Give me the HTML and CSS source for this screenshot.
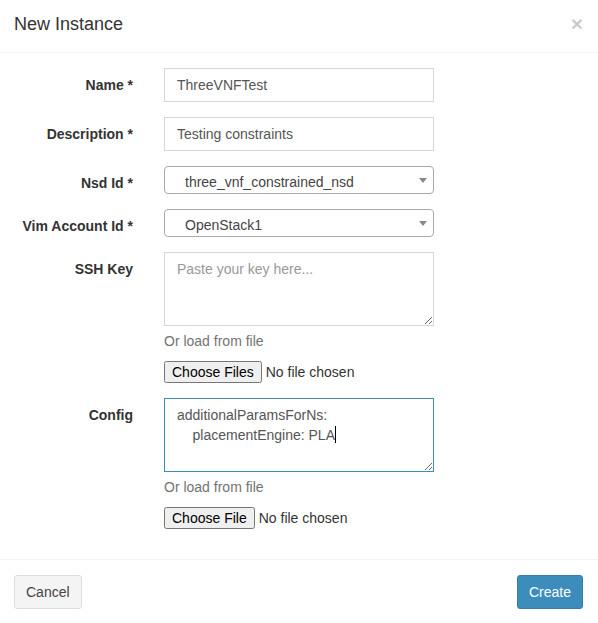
FILE: index.html
```html
<!DOCTYPE html>
<html>
<head>
<meta charset="utf-8">
<link rel="stylesheet" href="styles.css">
</head>
<body>
<div class="modal">
  <div class="modal-header">
    <h4 class="modal-title">New Instance</h4>
    <span class="close">×</span>
  </div>
  <div class="modal-body">
    <div class="form-group">
      <label class="control-label">Name *</label>
      <div class="field"><input class="form-control" type="text" value="ThreeVNFTest"></div>
    </div>
    <div class="form-group">
      <label class="control-label">Description *</label>
      <div class="field"><input class="form-control" type="text" value="Testing constraints"></div>
    </div>
    <div class="form-group">
      <label class="control-label">Nsd Id *</label>
      <div class="field"><div class="select"><span>three_vnf_constrained_nsd</span><i class="arrow"></i></div></div>
    </div>
    <div class="form-group">
      <label class="control-label">Vim Account Id *</label>
      <div class="field"><div class="select"><span>OpenStack1</span><i class="arrow"></i></div></div>
    </div>
    <div class="form-group">
      <label class="control-label">SSH Key</label>
      <div class="field">
        <textarea class="form-control area" rows="3" placeholder="Paste your key here..."></textarea>
        <p class="help-block">Or load from file</p>
        <input class="file" type="file" multiple>
      </div>
    </div>
    <div class="form-group">
      <label class="control-label">Config</label>
      <div class="field">
        <div class="form-control area focused">additionalParamsForNs:
    placementEngine: PLA<span class="caret"></span></div>
        <p class="help-block">Or load from file</p>
        <input class="file" type="file">
      </div>
    </div>
  </div>
  <div class="modal-footer">
    <button class="btn btn-default">Cancel</button>
    <button class="btn btn-primary">Create</button>
  </div>
</div>
</body>
</html>
```
FILE: styles.css
```css
* { box-sizing: border-box; }
html, body { margin: 0; padding: 0; background: #fff; }
body {
  font-family: "Liberation Sans", Arial, Helvetica, sans-serif;
  font-size: 14px;
  line-height: 20px;
  color: #333;
}
.modal { width: 598px; }
.modal-header {
  display: flex;
  justify-content: space-between;
  align-items: flex-start;
  padding: 14px 15px 15px 14px;
  border-bottom: 1px solid #f4f4f4;
  height: 53px;
}
.modal-title {
  margin: 0;
  font-size: 18px;
  font-weight: normal;
  line-height: 20px;
  color: #333;
}
.close {
  font-size: 21px;
  font-weight: bold;
  line-height: 1;
  color: #000;
  opacity: 0.2;
  margin-top: -1px;
}
.modal-body { padding: 15px 0; }
.form-group {
  display: grid;
  grid-template-columns: 149px 270px;
  column-gap: 15px;
  margin-bottom: 15px;
  align-items: start;
}
.control-label {
  text-align: right;
  font-weight: bold;
  padding-top: 7px;
  padding-right: 16px;
  line-height: 20px;
  color: #333;
}
.form-control {
  display: block;
  width: 270px;
  height: 34px;
  padding: 6px 12px;
  font-family: inherit;
  font-size: 14px;
  line-height: 20px;
  color: #555;
  background: #fff;
  border: 1px solid #d2d6de;
  border-radius: 0;
  margin: 0;
  outline: none;
}
.area {
  height: 74px;
  resize: both;
  overflow: auto;
}
textarea.form-control::placeholder { color: #999; }
.focused {
  border-color: #3c8dbc;
  white-space: pre;
  color: #555;
}
.caret {
  display: inline-block;
  width: 1px;
  height: 17px;
  background: #000;
  vertical-align: -3px;
}
.select {
  position: relative;
  width: 270px;
  height: 28px;
  border: 1px solid #aaa;
  border-radius: 4px;
  padding: 3px 20px;
  color: #444;
  font-size: 14px;
  line-height: 20px;
}
.select span { display: block; padding-top: 2px; }
.arrow {
  position: absolute;
  right: 6px;
  top: 11px;
  width: 0;
  height: 0;
  border-left: 4px solid transparent;
  border-right: 4px solid transparent;
  border-top: 5px solid #888;
}
.help-block {
  margin: 5px 0 10px;
  color: #737373;
  line-height: 20px;
}
.file {
  display: block;
  font-family: inherit;
  font-size: 14px;
  height: 22px;
  color: #333;
}
.modal-footer {
  display: flex;
  justify-content: space-between;
  padding: 15px 15px 14px 14px;
  border-top: 1px solid #f4f4f4;
}
.btn {
  height: 34px;
  padding: 6px 11px;
  font-family: inherit;
  font-size: 14px;
  line-height: 20px;
  border-radius: 3px;
  border: 1px solid transparent;
  box-shadow: none;
}
.btn-default {
  background: #f4f4f4;
  border-color: #ddd;
  color: #444;
}
.btn-primary {
  background: #3c8dbc;
  border-color: #367fa9;
  color: #fff;
}
```
